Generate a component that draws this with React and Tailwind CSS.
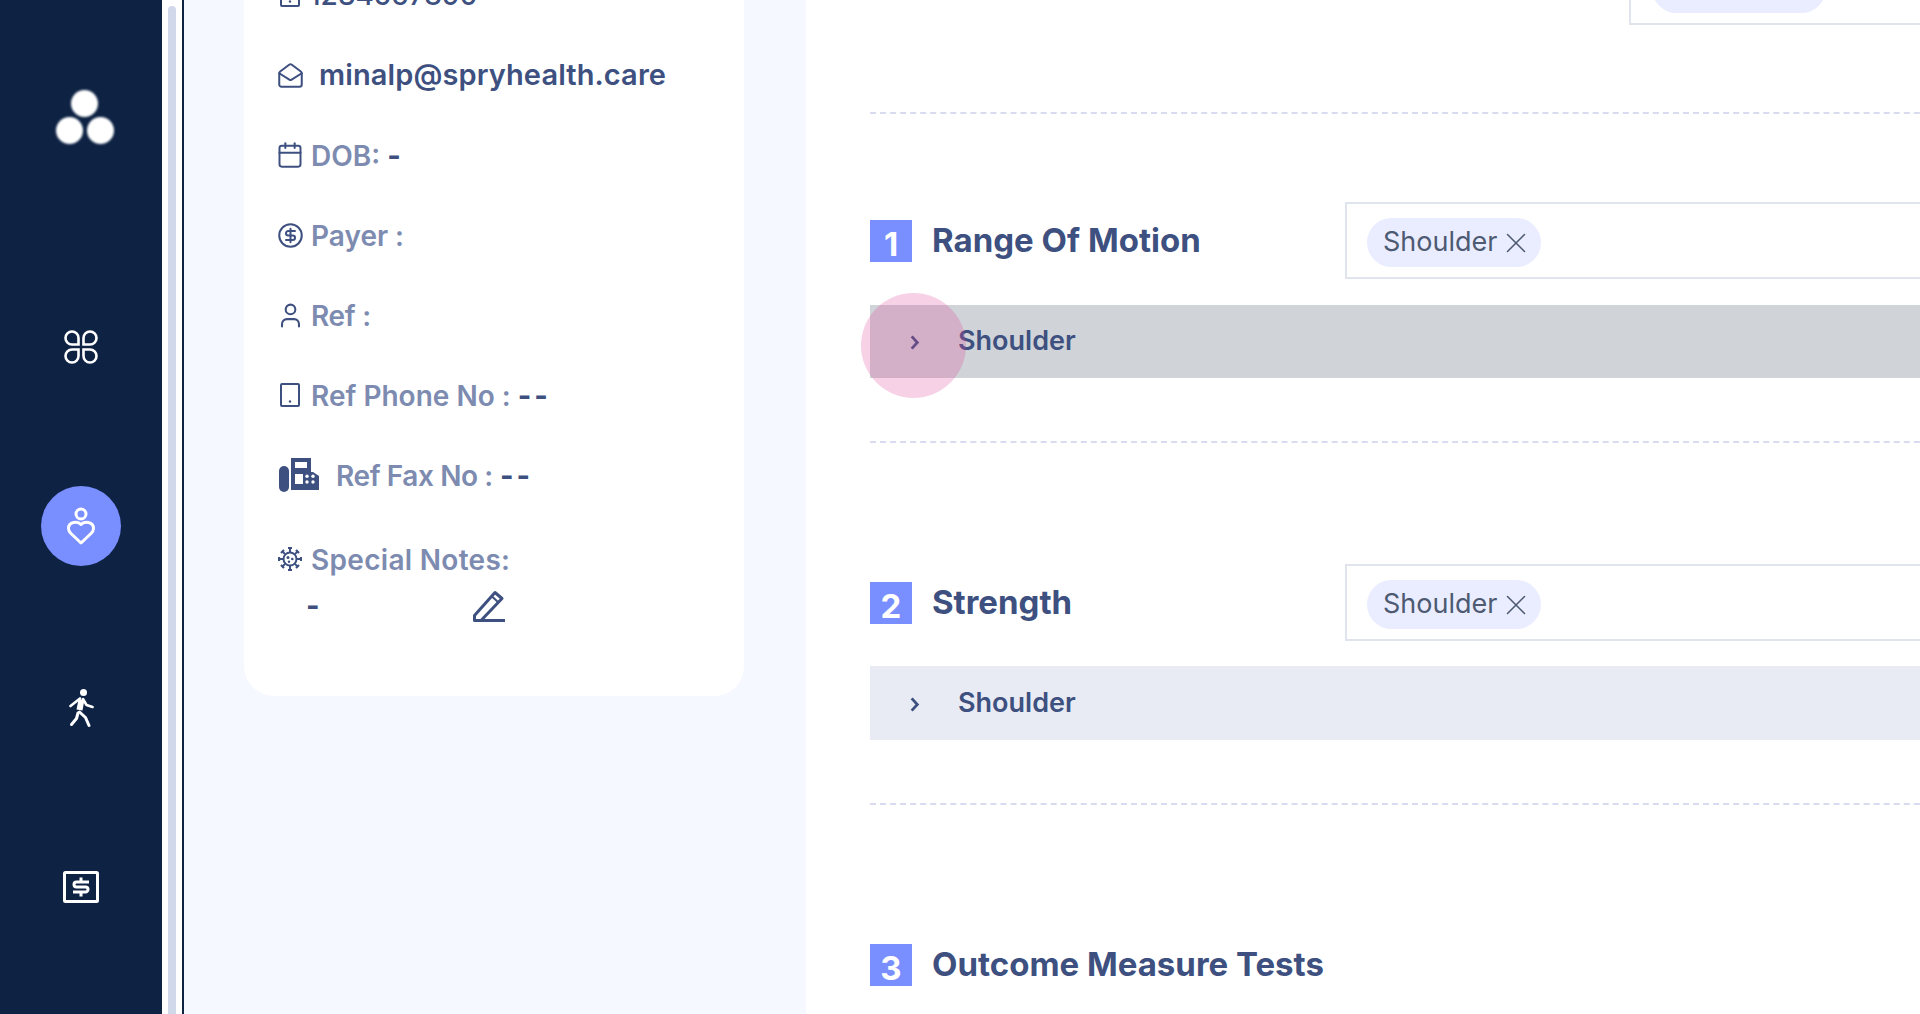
import React from "react";
import { Calendar, CircleDollarSign, MailOpen, User, X } from "lucide-react";

function Petals() {
  return (
    <svg viewBox="0 0 34 34" className="w-[34px] h-[34px]" fill="none" stroke="white" strokeWidth="2.600">
      <path d="M14.500 14.500H8A6.500 6.500 0 1 1 14.500 8z" />
      <path d="M19.500 14.500V8A6.500 6.500 0 1 1 26 14.500z" />
      <path d="M14.500 19.500V26A6.500 6.500 0 1 1 8 19.500z" />
      <path d="M19.500 19.500H26A6.500 6.500 0 1 1 19.500 26z" />
    </svg>
  );
}

function PersonHeart() {
  return (
    <svg viewBox="0 0 30 38" className="w-[30px] h-[38px]" fill="none" stroke="white" strokeWidth="3">
      <circle cx="15" cy="7" r="5" />
      <path d="M15 17.500c-3-3.500-12.500-3-12.500 4 0 2 1 3.500 2.500 5L15 36l10-9.500c1.500-1.500 2.500-3 2.500-5 0-7-9.500-7.500-12.500-4z" strokeLinejoin="round" />
    </svg>
  );
}

function Walker() {
  return (
    <svg viewBox="0 0 25 38" className="w-[25px] h-[38px]" fill="none" stroke="white" strokeLinecap="round" strokeLinejoin="round">
      <circle cx="14.500" cy="3.500" r="3.500" fill="white" stroke="none" />
      <path d="M12.500 10.500L10.500 21" strokeWidth="6" strokeLinecap="butt" />
      <path d="M11 9.500L1.500 17" strokeWidth="2.600" />
      <path d="M14 10l3.500 6 6 2" strokeWidth="2.600" />
      <path d="M9 24l-1.500 5.500L2.500 35.500" strokeWidth="3" />
      <path d="M10.500 23l6 5.500 3.500 8" strokeWidth="3" />
    </svg>
  );
}

function DollarBox() {
  return (
    <svg viewBox="0 0 36 32" className="w-[36px] h-[32px]" fill="none" stroke="white">
      <rect x="1.500" y="1.500" width="33" height="29" strokeWidth="3" rx="1" />
      <path d="M26 11H13.500a2.500 2.500 0 0 0 0 5h9a2.500 2.500 0 0 1 0 5H10M18 6.500v4.500M18 21v4.500" strokeWidth="3" />
    </svg>
  );
}

function TabletIcon() {
  return (
    <svg viewBox="0 0 20 24" className="w-[20px] h-[24px] shrink-0" fill="none" stroke="#3d5080" strokeWidth="2">
      <rect x="1" y="1" width="18" height="22" rx="1" />
      <circle cx="10" cy="18.500" r="1.200" fill="#3d5080" stroke="none" />
    </svg>
  );
}

function FaxIcon() {
  return (
    <svg viewBox="0 0 40 34" className="w-[40px] h-[34px] shrink-0 ml-[17px]" fill="#3d5080">
      <rect x="0" y="8" width="10" height="26" rx="5" />
      <path d="M12 32V14h0V0h20v14h2l6 4v14z" />
      <rect x="16" y="4" width="12" height="6" fill="white" />
      <rect x="16" y="16" width="8" height="10" fill="white" />
      <circle cx="28" cy="18.300" r="1.700" fill="white" />
      <circle cx="34" cy="18.300" r="1.700" fill="white" />
      <circle cx="28" cy="24" r="1.700" fill="white" />
      <circle cx="34" cy="24" r="1.700" fill="white" />
    </svg>
  );
}

function VirusIcon() {
  return (
    <svg viewBox="0 0 24 24" className="w-[24px] h-[24px] shrink-0" fill="none" stroke="#3d5080" strokeWidth="2">
      <circle cx="12" cy="12" r="6.500" />
      <path d="M12 1v4M12 19v4M1 12h4M19 12h4M4.200 4.200l2.900 2.900M16.900 16.900l2.900 2.900M4.200 19.800l2.900-2.900M16.900 7.100l2.900-2.900" />
      <path d="M10 1h4M10 23h4M1 10v4M23 10v4M3 6l3-3M18 3l3 3M3 18l3 3M18 21l3-3" strokeWidth="2.200" />
      <circle cx="10" cy="10.500" r="1.500" fill="#3d5080" stroke="none" />
      <circle cx="14.300" cy="12" r="1.300" fill="#3d5080" stroke="none" />
      <circle cx="11" cy="14.800" r="1.200" fill="#3d5080" stroke="none" />
    </svg>
  );
}

function EditPencil() {
  return (
    <svg viewBox="0 0 32 32" className="w-[32px] h-[32px]" fill="none" stroke="#3d5080" strokeWidth="3">
      <path d="M1.500 30.500v-5L22 2.500l7 6-21 22z" strokeLinejoin="round" />
      <path d="M19 6.500l6.500 6" strokeWidth="2" />
      <path d="M1 30.500h31" />
    </svg>
  );
}

function Chevron() {
  return (
    <svg viewBox="0 0 10 16" className="w-[11px] h-[15px]" fill="none" stroke="#3d5080" strokeWidth="3">
      <path d="M2 1.500L8 8l-6 6.500" />
    </svg>
  );
}

function Chip() {
  return (
    <div className="flex items-center h-[49px] w-[174px] pl-[16px] rounded-[25px] bg-[#eaedff] text-[#4d5a72] text-[27px]">
      Shoulder
      <X size={34} strokeWidth={1.1} className="ml-[2px] shrink-0" />
    </div>
  );
}

function InfoRow({ icon, label, value, gap = "ml-[9px]", track = "tracking-[0px]" }) {
  return (
    <div className="flex items-center h-[80px]">
      <div className="flex justify-center shrink-0 w-[24px]">{icon}</div>
      <span className={`${gap} ${track} pt-[1px] text-[#7d8bb0] text-[28px] font-semibold`}>{label}</span>
      {value && <span className="ml-[7px] pt-[1px] text-[#3d5080] text-[29px] tracking-[3px] font-bold">{value}</span>}
    </div>
  );
}

function Section({ num, title, mt, field = true, bar, barBox, active }) {
  return (
    <div className={mt}>
      <div className="flex items-center h-[77px]">
        <div className="flex w-[475px] items-center">
          <div className="flex justify-center items-end w-[42px] h-[42px] bg-[#7a8fff] text-white text-[33px] leading-[36px] font-bold">
            {num}
          </div>
          <div className="ml-[20px] text-[#3d5080] text-[33px] font-bold">{title}</div>
        </div>
        {field && (
          <div className="flex items-center w-[600px] h-[77px] pl-[20px] pt-[4px] border-2 border-[#e0e4ec]">
            <Chip />
          </div>
        )}
      </div>
      {bar && (
        <div className={`relative flex items-center ${barBox} ${bar}`}>
          <div className="flex justify-center w-[88px] mt-[2px]">
            <Chevron />
          </div>
          <span className="text-[#3d5080] text-[27px] font-semibold">Shoulder</span>
          {active && <div className="absolute left-[-9px] top-[-12px] w-[105px] h-[105px] rounded-full bg-[#e14896]/25" />}
        </div>
      )}
    </div>
  );
}

function App() {
  return (
    <div className="flex h-[1014px] overflow-hidden bg-white font-['Inter',sans-serif]">
      {/* nav rail */}
      <div className="flex flex-col items-center w-[162px] shrink-0 bg-[#0e2344]">
        <div className="flex flex-col items-center w-[62px] h-[55px] mt-[90px] ml-[7px]">
          <div className="w-[27px] h-[27px] rounded-full bg-white blur-[0.8px]" />
          <div className="flex gap-[4px]">
            <div className="w-[27px] h-[27px] rounded-full bg-white blur-[0.8px]" />
            <div className="w-[27px] h-[27px] rounded-full bg-white blur-[0.8px]" />
          </div>
        </div>
        <div className="mt-[185px]">
          <Petals />
        </div>
        <div className="flex items-center justify-center w-[80px] h-[80px] mt-[122px] rounded-full bg-[#7a8fff]">
          <PersonHeart />
        </div>
        <div className="mt-[123px]">
          <Walker />
        </div>
        <div className="mt-[144px]">
          <DollarBox />
        </div>
      </div>

      {/* scrollbar */}
      <div className="w-[22px] shrink-0 pl-[6px] pt-[6px] bg-white border-r-2 border-[#0e2344]">
        <div className="w-[8px] h-full rounded-t-[4px] bg-[#d0d8ea]" />
      </div>

      {/* patient card */}
      <div className="w-[622px] shrink-0 pl-[60px] bg-[#f5f8fe]">
        <div className="w-[500px] h-[741px] -mt-[45px] px-[34px] rounded-[30px] bg-white">
          <div className="flex items-center h-[80px]">
            <div className="flex justify-center w-[24px]">
              <TabletIcon />
            </div>
            <span className="ml-[7px] text-[#3d5080] text-[28px] font-medium">1234567890</span>
          </div>
          <div className="flex items-center h-[80px]">
            <div className="flex justify-center w-[24px]">
              <MailOpen size={27} color="#3d5080" strokeWidth={1.8} className="shrink-0" />
            </div>
            <span className="ml-[17px] text-[#3d5080] text-[29px] tracking-[0.1px] font-semibold">minalp@spryhealth.care</span>
          </div>
          <InfoRow icon={<Calendar size={28} color="#3d5080" strokeWidth={1.7} className="shrink-0" />} label="DOB:" value="-" />
          <InfoRow icon={<CircleDollarSign size={27} color="#3d5080" strokeWidth={1.8} className="shrink-0" />} label="Payer :" />
          <InfoRow icon={<User size={29} color="#3d5080" strokeWidth={1.7} className="shrink-0" />} label="Ref :" track="tracking-[-0.3px]" />
          <InfoRow icon={<TabletIcon />} label="Ref Phone No :" value="--" />
          <InfoRow icon={<FaxIcon />} label="Ref Fax No :" value="--" gap="ml-[34px]" track="tracking-[-0.4px]" />
          <div className="flex items-center h-[44px] mt-[22px]">
            <div className="flex justify-center w-[24px]">
              <VirusIcon />
            </div>
            <span className="ml-[9px] pt-[1px] text-[#7d8bb0] text-[28px] tracking-[0.3px] font-semibold">Special Notes:</span>
          </div>
          <div className="flex items-center mt-[3px] pl-[28px]">
            <span className="w-[167px] text-[#3d5080] text-[29px] font-bold">-</span>
            <EditPencil />
          </div>
        </div>
      </div>

      {/* assessment form */}
      <div className="flex-1 min-w-0 pl-[64px] overflow-hidden bg-white">
        <div className="w-[1100px]">
          <div className="flex items-center ml-[759px] w-[341px] h-[77px] -mt-[52px] pl-[21px] pt-[4px] border-2 border-[#e0e4ec]">
            <div className="w-[174px] h-[49px] rounded-[25px] bg-[#eaedff]" />
          </div>
          <div className="mt-[87px] border-t-2 border-dashed border-[#d9dcf0]" />
          <Section num="1" title="Range Of Motion" mt="mt-[88px]" bar="bg-[#d0d3d8]" barBox="h-[73px] mt-[26px]" active />
          <div className="mt-[63px] border-t-2 border-dashed border-[#d9dcf0]" />
          <Section num="2" title="Strength" mt="mt-[121px]" bar="bg-[#e8ebf3]" barBox="h-[74px] mt-[25px]" />
          <div className="mt-[63px] border-t-2 border-dashed border-[#d9dcf0]" />
          <Section num="3" title="Outcome Measure Tests" mt="mt-[121px]" field={false} />
        </div>
      </div>
    </div>
  );
}

export default App;
